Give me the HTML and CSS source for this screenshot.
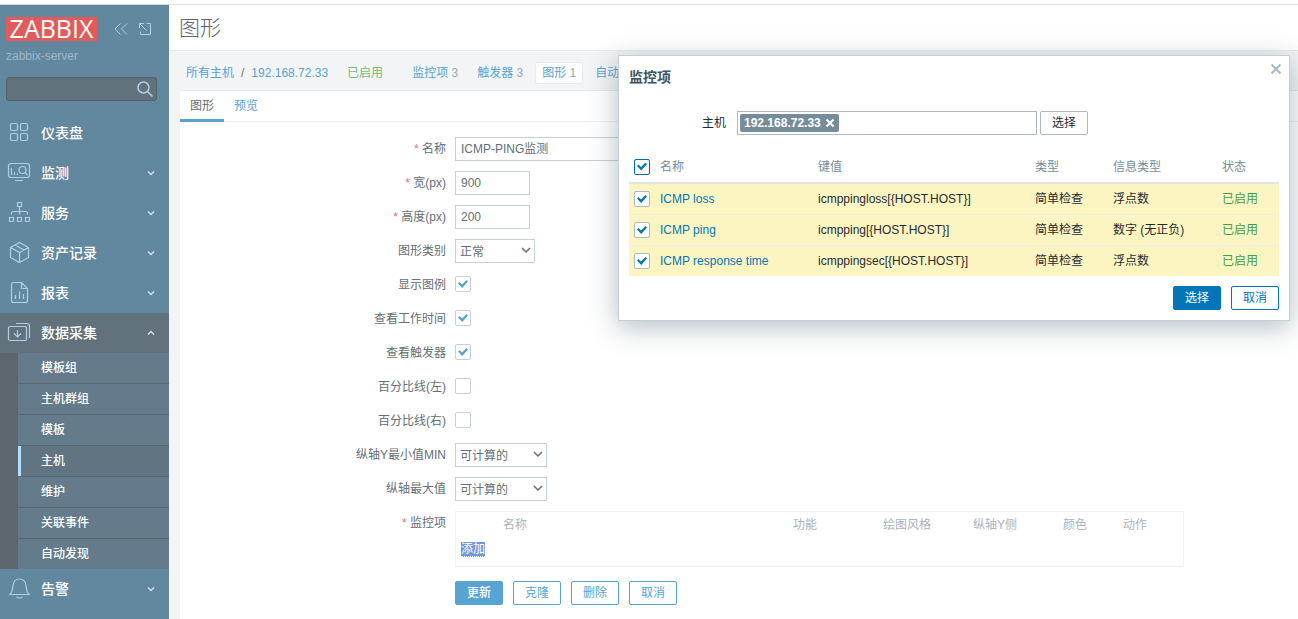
FILE: index.html
```html
<!DOCTYPE html>
<html lang="zh-CN">
<head>
<meta charset="utf-8">
<title>图形</title>
<link rel="stylesheet" href="styles.css">
</head>
<body>
<div class="app">
  <aside class="sidebar">
    <div class="brand">
      <a class="logo" href="#">ZABBIX</a>
      <button class="icon-btn" type="button" aria-label="收起"><svg width="16" height="16" viewBox="0 0 16 16"><path d="M7.500 2.500 2 8l5.500 5.500M14 2.500 8.500 8l5.500 5.500"/></svg></button>
      <button class="icon-btn" type="button" aria-label="隐藏"><svg width="16" height="16" viewBox="0 0 16 16"><path d="M9.500 2.500h4v11h-10v-3M2.500 2.500l7 7M2.500 7V2.500H7"/></svg></button>
    </div>
    <div class="server">zabbix-server</div>
    <form class="search">
      <input type="text" aria-label="搜索">
      <button type="button" aria-label="搜索"><svg width="18" height="18" viewBox="0 0 18 18"><circle cx="7.500" cy="7.500" r="5.500"/><path d="m11.500 11.500 5 5"/></svg></button>
    </form>
    <nav class="menu">
      <a href="#" class="item"><svg class="ico" viewBox="0 0 24 24"><rect x="3.500" y="2.500" width="7" height="7" rx="1.500"/><rect x="13.500" y="2.500" width="7" height="7" rx="1.500"/><rect x="3.500" y="12.500" width="7" height="7" rx="1.500"/><rect x="13.500" y="12.500" width="7" height="7" rx="1.500"/></svg><span>仪表盘</span></a>
      <a href="#" class="item"><svg class="ico" viewBox="0 0 24 24"><rect x="1.500" y="2.500" width="21" height="14" rx="2.500"/><path d="M8 19.500h8M4.500 7v7M7.500 11v3M10.500 12.500V14M18 11.500l2.500 2.500"/><circle cx="15.500" cy="9" r="3.500"/></svg><span>监测</span><svg class="chev" viewBox="0 0 8 8"><path d="m1 2.500 3 3 3-3"/></svg></a>
      <a href="#" class="item"><svg class="ico" viewBox="0 0 24 24"><path d="M10.500 1.500h4v4h-4zM2.500 16.500h4v4h-4zM10.500 16.500h4v4h-4zM18.500 16.500h4v4h-4zM12.500 5.500v8M4.500 13.500v-1q0-2 2-2h12q2 0 2 2v1"/></svg><span>服务</span><svg class="chev" viewBox="0 0 8 8"><path d="m1 2.500 3 3 3-3"/></svg></a>
      <a href="#" class="item"><svg class="ico" viewBox="0 0 24 24"><path d="m12.500 1.500 9 5v10l-9 5-9-5v-10zM3.500 6.500l9 5 9-5M12.500 11.500v10M8 4l9 5"/></svg><span>资产记录</span><svg class="chev" viewBox="0 0 8 8"><path d="m1 2.500 3 3 3-3"/></svg></a>
      <a href="#" class="item"><svg class="ico" viewBox="0 0 24 24"><path d="M14.500 1.500h-8q-2 0-2 2v16q0 2 2 2h12q2 0 2-2V7.500zv6h6M8.500 14v4M12.500 10.500V18M16.500 13v5"/></svg><span>报表</span><svg class="chev" viewBox="0 0 8 8"><path d="m1 2.500 3 3 3-3"/></svg></a>
      <a href="#" class="item open"><svg class="ico" viewBox="0 0 24 24"><rect x="1.500" y="5.500" width="18" height="14" rx="1.500"/><path d="M9 2.500h11q2.500 0 2.500 2.500v12M10.500 9v7M7 12.500l3.500 3.500 3.500-3.500"/></svg><span>数据采集</span><svg class="chev" viewBox="0 0 8 8"><path d="m1 5.500 3-3 3 3"/></svg></a>
      <div class="submenu">
        <a href="#">模板组</a>
        <a href="#">主机群组</a>
        <a href="#">模板</a>
        <a href="#" class="current">主机</a>
        <a href="#">维护</a>
        <a href="#">关联事件</a>
        <a href="#">自动发现</a>
      </div>
      <a href="#" class="item"><svg class="ico" viewBox="0 0 24 24"><path d="M3 17.500c2-2 2.500-4 3-9C6.500 4.500 9 2 12.500 2s6 2.500 6.500 6.500c.5 5 1 7 3 9zM9.500 20q3 2 6 0"/></svg><span>告警</span><svg class="chev" viewBox="0 0 8 8"><path d="m1 2.500 3 3 3-3"/></svg></a>
    </nav>
  </aside>

  <main class="main">
    <header class="head"><h1>图形</h1></header>
    <nav class="crumbs">
      <a href="#">所有主机</a><span class="sep">/</span><a href="#">192.168.72.33</a>
      <span class="enabled">已启用</span>
      <div class="objects">
        <a href="#">监控项 <i>3</i></a>
        <a href="#">触发器 <i>3</i></a>
        <a href="#" class="sel">图形 <i>1</i></a>
        <a href="#">自动</a>
      </div>
    </nav>
    <section class="panel">
      <div class="tabs"><a href="#" class="active">图形</a><a href="#">预览</a></div>
      <form class="form">
        <label for="name"><b>*</b> 名称</label>
        <div><input class="text long" id="name" type="text" value="ICMP-PING监测"></div>
        <label for="w"><b>*</b> 宽(px)</label>
        <div><input class="text" id="w" type="text" value="900"></div>
        <label for="h"><b>*</b> 高度(px)</label>
        <div><input class="text" id="h" type="text" value="200"></div>
        <label for="type">图形类别</label>
        <div><span class="pick narrow"><select id="type"><option>正常</option></select><svg viewBox="0 0 10 10"><path d="m1 3 4 4 4-4"/></svg></span></div>
        <label for="legend">显示图例</label>
        <div><input class="check" id="legend" type="checkbox" checked></div>
        <label for="work">查看工作时间</label>
        <div><input class="check" id="work" type="checkbox" checked></div>
        <label for="trig">查看触发器</label>
        <div><input class="check" id="trig" type="checkbox" checked></div>
        <label for="pl">百分比线(左)</label>
        <div><input class="check" id="pl" type="checkbox"></div>
        <label for="pr">百分比线(右)</label>
        <div><input class="check" id="pr" type="checkbox"></div>
        <label for="ymin">纵轴Y最小值MIN</label>
        <div><span class="pick"><select id="ymin"><option>可计算的</option></select><svg viewBox="0 0 10 10"><path d="m1 3 4 4 4-4"/></svg></span></div>
        <label for="ymax">纵轴最大值</label>
        <div><span class="pick"><select id="ymax"><option>可计算的</option></select><svg viewBox="0 0 10 10"><path d="m1 3 4 4 4-4"/></svg></span></div>
        <label for="add"><b>*</b> 监控项</label>
        <div class="items">
          <table>
            <colgroup><col class="i-name"><col class="i-wide"><col class="i-wide"><col class="i-wide"><col class="i-color"><col class="i-color"></colgroup>
            <thead><tr><th class="first">名称</th><th>功能</th><th>绘图风格</th><th>纵轴Y侧</th><th>颜色</th><th>动作</th></tr></thead>
            <tbody><tr><td colspan="6"><button class="add" id="add" type="button">添加</button></td></tr></tbody>
          </table>
        </div>
        <div class="buttons">
          <button class="btn primary" type="button">更新</button>
          <button class="btn" type="button">克隆</button>
          <button class="btn" type="button">删除</button>
          <button class="btn" type="button">取消</button>
        </div>
      </form>
    </section>
  </main>
</div>

<div class="dialog" role="dialog" aria-labelledby="dlg-title">
  <div class="dlg-head">
    <h4 id="dlg-title">监控项</h4>
    <button class="close" type="button" aria-label="关闭"><svg width="12" height="12" viewBox="0 0 12 12"><path d="m1.500 1.500 9 9m0-9-9 9"/></svg></button>
  </div>
  <div class="filter">
    <label for="host">主机</label>
    <div class="multi">
      <span class="tag">192.168.72.33<button type="button" aria-label="移除"><svg width="10" height="10" viewBox="0 0 10 10"><path d="m1.500 1.500 7 7m0-7-7 7"/></svg></button></span>
      <input id="host" type="text">
    </div>
    <button class="btn grey" type="button">选择</button>
  </div>
  <table class="list">
    <colgroup><col class="c-check"><col class="c-name"><col class="c-key"><col class="c-type"><col class="c-info"><col></colgroup>
    <thead><tr><th><input class="check vivid focus" type="checkbox" aria-label="全选" checked></th><th>名称</th><th>键值</th><th>类型</th><th>信息类型</th><th>状态</th></tr></thead>
    <tbody>
      <tr><td><input class="check vivid" type="checkbox" aria-label="ICMP loss" checked></td><td><a href="#">ICMP loss</a></td><td>icmppingloss[{HOST.HOST}]</td><td>简单检查</td><td>浮点数</td><td class="on">已启用</td></tr>
      <tr><td><input class="check vivid" type="checkbox" aria-label="ICMP ping" checked></td><td><a href="#">ICMP ping</a></td><td>icmpping[{HOST.HOST}]</td><td>简单检查</td><td>数字 (无正负)</td><td class="on">已启用</td></tr>
      <tr><td><input class="check vivid" type="checkbox" aria-label="ICMP response time" checked></td><td><a href="#">ICMP response time</a></td><td>icmppingsec[{HOST.HOST}]</td><td>简单检查</td><td>浮点数</td><td class="on">已启用</td></tr>
    </tbody>
  </table>
  <div class="dlg-foot">
    <button class="btn solid" type="button">选择</button>
    <button class="btn outline" type="button">取消</button>
  </div>
</div>
</body>
</html>
```

FILE: styles.css
```css
* { box-sizing: border-box; }
body {
  margin: 0;
  font: 12px/24px "Liberation Sans", "Noto Sans CJK SC", sans-serif;
  color: #656e73;
  background: #fff;
  overflow: hidden;
}
a { text-decoration: none; color: #57a3d1; }
button, input, select { font: inherit; color: inherit; margin: 0; }
button { padding: 0; border: 0; background: none; cursor: pointer; }
svg { fill: none; stroke: currentColor; display: block; }

.app { display: flex; min-height: 100vh; border-top: 1px solid #ddd; margin-top: 4px; }

/* Sidebar */
.sidebar { width: 169px; flex: none; background: #62889f; color: #b3cfe0; }
.brand { display: flex; align-items: center; padding: 12px 0 0 6px; }
.logo {
  width: 91px; height: 24px; margin-right: 16px;
  background: #e35a5a; color: #fff;
  font: 500 25px/22px "Open Sans", sans-serif; text-align: center;
}
.icon-btn { margin-right: 8px; color: #b3cfe0; }
.server { padding: 3px 6px 0; color: #9db8c8; }
.search {
  display: flex; align-items: center;
  margin: 9px 12px 12px 6px; height: 24px;
  background: #61727d; border: 1px solid #566066; border-radius: 3px;
}
.search input { flex: 1; min-width: 0; border: 0; background: none; outline: 0; }
.search button { color: #b3cfe0; margin-right: 2px; }
.search svg { stroke-width: 1.5; }
.item { display: flex; align-items: center; height: 40px; padding: 0 14px 0 7px; color: #fff; font-size: 14px; font-weight: 500; }
.item span { flex: 1; }
.ico { width: 24px; height: 24px; margin-right: 10px; color: #b0cfe3; stroke-width: 1.2; }
.chev { width: 8px; height: 8px; color: #cfe0ea; stroke-width: 1.5; }
.item.open { background: #61727d; }
.submenu { border-left: 18px solid #5d666c; background: #637b8a; display: flex; flex-direction: column; }
.submenu a { height: 31px; line-height: 30px; border-bottom: 1px solid #586871; color: #fff; font-weight: 500; padding-left: 23px; }
.submenu a:last-child { height: 30px; border-bottom: 0; }
.submenu .current { background: #607482; box-shadow: inset 3px 0 #b0dfff; }

/* Page */
.main { flex: 1; min-width: 0; background: #f2f4f5; display: flex; flex-direction: column; }
.head { background: #fff; border-bottom: 1px solid #e6e9eb; padding: 0 10px; height: 46px; }
h1 { margin: 0; font-size: 21px; line-height: 45px; font-weight: 300; color: #5c666c; }
.crumbs { display: flex; align-items: center; white-space: nowrap; padding: 10px 17px 5px; height: 39px; }
.sep { margin: 0 7px; }
.enabled { margin: 0 23px 0 19px; color: #7ab97d; }
.objects { display: flex; gap: 7px; }
.objects a { padding: 0 6px; line-height: 20px; border-radius: 2px; }
.objects i { font-style: normal; color: #a0a9ae; }
.objects .sel { background: #fff; box-shadow: 0 0 0 1px #e8ebed; }

.panel { flex: 1; margin-left: 11px; background: #fff; border-top: 1px solid #e6e9eb; }
.tabs { display: flex; border-bottom: 1px solid #eef0f1; height: 31px; }
.tabs a { padding: 0 10px; line-height: 30px; height: 31px; }
.tabs .active { color: #656e73; border-bottom: 3px solid #57a3d1; }

.form { display: grid; grid-template-columns: 266px minmax(0, 1fr); gap: 10px 9px; padding: 15px 10px 14px 0; }
.form label { text-align: right; }
.form label b { color: #e57373; font-weight: 400; }
.form > div { min-height: 24px; display: flex; align-items: center; }
.text { width: 75px; height: 24px; border: 1px solid #c5d0d6; padding: 0 5px; background: #fff; outline: 0; }
.long { width: 453px; }
.pick { position: relative; width: 92px; }
.narrow { width: 80px; }
.pick select { appearance: none; display: block; width: 100%; height: 24px; padding: 0 4px; border: 1px solid #c5d0d6; border-radius: 0; background: #fff; }
.pick svg { position: absolute; right: 4px; top: 6px; width: 10px; height: 10px; stroke-width: 1.5; color: #656e73; pointer-events: none; }

.check {
  appearance: none; display: grid; place-items: center;
  width: 16px; height: 16px; border: 1px solid #c5d0d6; border-radius: 2px; background: #fff; color: #57a3d1;
}
.form .check { margin-bottom: 2px; }
.check:checked::before {
  content: ""; width: 10px; height: 8px; background: currentColor;
  clip-path: polygon(0 45%, 15% 25%, 40% 55%, 85% 0, 100% 18%, 42% 100%);
}
.vivid { border-color: #acbbc2; color: #0275b8; }
.focus { border-color: #0268a3; }

.form .items { display: block; max-width: 729px; border: 1px solid #f0f2f3; padding: 3px 0 5px; }
.items table { width: 100%; table-layout: fixed; border-collapse: collapse; }
.items th { padding: 0; text-align: left; font-weight: 400; color: #a7b3ba; line-height: 20px; }
.items th.first { padding-left: 47px; }
.items td { padding: 2px 5px 0; height: 26px; }
.i-name { width: 337px; }
.i-wide { width: 90px; }
.i-color { width: 60px; }
.add { display: block; line-height: 14px; background: #7298dc; color: #fff; border-bottom: 1px dotted #fff; }

.form .buttons { grid-column: 2; gap: 10px; padding-top: 4px; }
.btn { min-width: 48px; height: 24px; line-height: 22px; padding: 0 11px; border: 1px solid #57a3d1; border-radius: 2px; color: #57a3d1; background: #fff; }
.primary { background: #57a3d1; color: #fff; font-weight: 500; }
.grey { border-color: #acbbc2; color: #1f2c33; }
.solid { background: #0275b8; border-color: #0275b8; color: #fff; }
.outline { border-color: #0275b8; color: #0275b8; }

/* Dialog */
.dialog {
  position: absolute; top: 55px; right: 8px; width: 672px; max-width: 100%;
  padding: 10px; background: #fff; color: #1f2c33;
  border: 1px solid #c5d0d6; box-shadow: 0 6px 26px rgba(62, 88, 102, .4);
}
.dlg-head { display: flex; justify-content: space-between; align-items: flex-start; }
h4 { margin: 0; font-size: 14px; line-height: 22px; font-weight: 700; color: #3c5563; }
.close { color: #a9b8c0; margin: -3px -3px 0 0; }
.close svg { stroke-width: 2; }
.filter { display: flex; padding: 23px 0 16px 73px; }
.filter label { margin-right: 11px; }
.multi { width: 300px; height: 24px; display: flex; align-items: center; border: 1px solid #acbbc2; padding: 0 2px; margin-right: 3px; }
.multi input { flex: 1; min-width: 0; border: 0; outline: 0; padding: 0; height: 20px; }
.tag { display: flex; align-items: center; gap: 4px; height: 18px; padding: 0 4px; border-radius: 2px; background: #768d99; color: #fff; font-weight: 700; line-height: 18px; }
.tag svg { stroke-width: 2; }
.list { width: 100%; table-layout: fixed; border-collapse: separate; border-spacing: 0; }
.list th, .list td { padding: 0 5px; text-align: left; font-weight: 400; white-space: nowrap; }
.list th { height: 33px; color: #768d99; border-bottom: 2px solid #dfe4e7; }
.list td { height: 31px; background: #fcf5c1; border-bottom: 1px solid #ebeef0; }
.list tbody tr:last-child td { height: 30px; border-bottom: 0; }
.list a { color: #0275b8; }
.list td.on { color: #429e47; }
.c-check { width: 26px; }
.c-name { width: 158px; }
.c-key { width: 217px; }
.c-type { width: 78px; }
.c-info { width: 109px; }
.dlg-foot { display: flex; justify-content: flex-end; gap: 10px; padding-top: 10px; }
```
